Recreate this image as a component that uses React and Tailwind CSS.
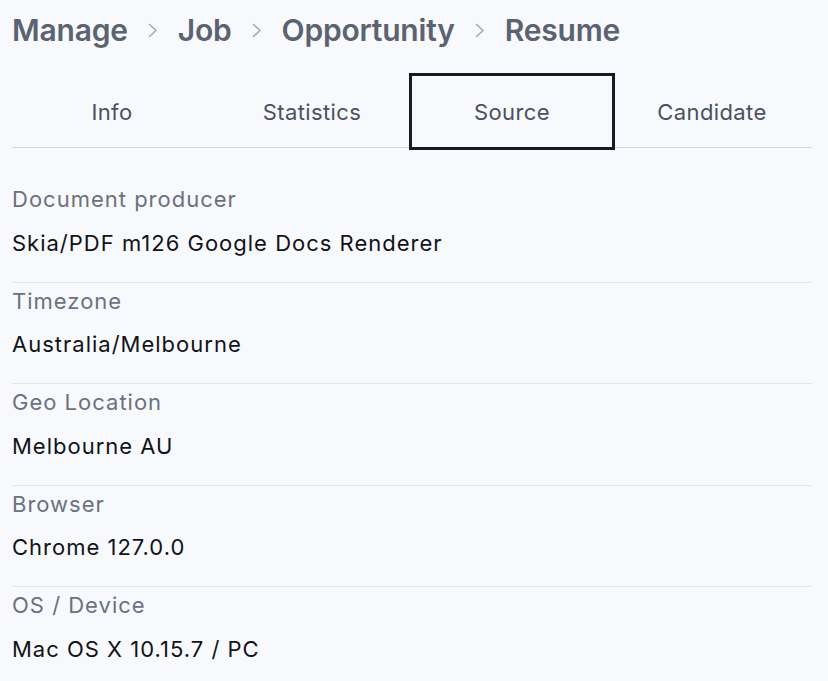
import React from "react";

const crumbs = ["Manage", "Job", "Opportunity", "Resume"];
const tabs = ["Info", "Statistics", "Source", "Candidate"];
const rows = [
    { label: "Document producer", value: "Skia/PDF m126 Google Docs Renderer" },
    { label: "Timezone", value: "Australia/Melbourne" },
    { label: "Geo Location", value: "Melbourne AU" },
    { label: "Browser", value: "Chrome 127.0.0" },
    { label: "OS / Device", value: "Mac OS X 10.15.7 / PC" },
];

function Chevron() {
    return (
        <svg width="10" height="15" viewBox="0 0 10 15" fill="none" className="shrink-0">
            <polyline points="1.5,1.5 8,7.5 1.5,13.5" stroke="#a3a8b3" strokeWidth="1.6" strokeLinecap="round" strokeLinejoin="round" />
        </svg>
    );
}

export default function App() {
    return (
        <div className="min-h-screen bg-[#f8f9fc] px-3 font-['Inter',sans-serif]">
            <div className="w-[800px]">
                <nav className="flex items-center gap-[20px] pt-3 text-[30px] leading-9 font-semibold tracking-[-0.2px] text-[#5c6370]">
                    {crumbs.map((c, i) => (
                        <React.Fragment key={c}>
                            {i > 0 && <Chevron />}
                            <span>{c}</span>
                        </React.Fragment>
                    ))}
                </nav>

                <div className="mt-[28px] flex h-[72px] border-b border-[#d4d6dc]">
                    {tabs.map((t) => (
                        <button
                            key={t}
                            className={
                                "flex-1 pt-[2px] text-[22px] tracking-[0.4px] text-[#4b5160] " +
                                (t === "Source" ? "outline-3 outline-[#171a26]" : "")
                            }
                        >
                            {t}
                        </button>
                    ))}
                </div>

                <dl className="pt-[33px]">
                    {rows.map((r) => (
                        <div key={r.label} className="border-b border-[#e3e5ea] pt-[2px] pb-[23px] last:border-b-0">
                            <dt className="text-[22px] leading-8 tracking-[1px] text-[#6b717e]">{r.label}</dt>
                            <dd className="mt-[11.5px] text-[22px] leading-8 tracking-[1px] text-[#111318]">{r.value}</dd>
                        </div>
                    ))}
                </dl>
            </div>
        </div>
    );
}
